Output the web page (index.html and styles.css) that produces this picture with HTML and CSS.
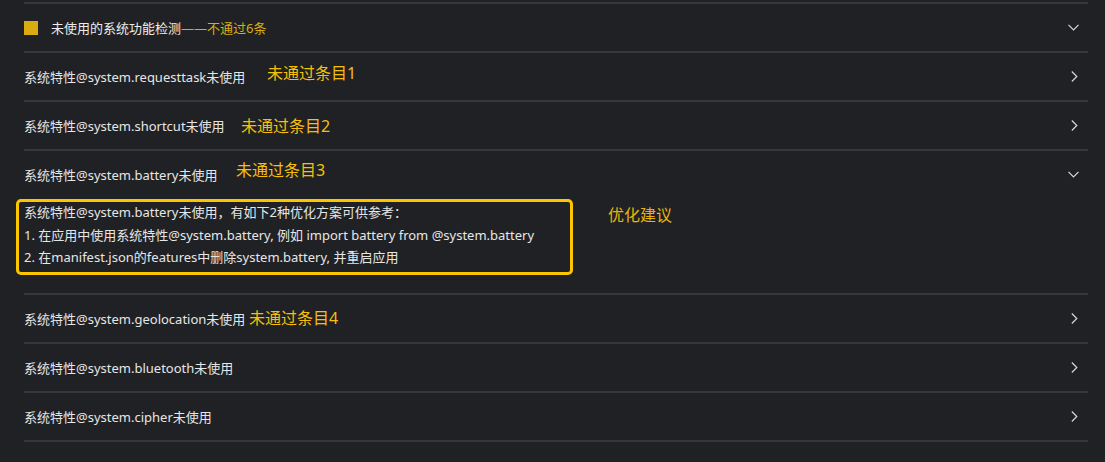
FILE: index.html
```html
<!DOCTYPE html>
<html lang="zh-CN">
<head>
<meta charset="utf-8">
<title>未使用的系统功能检测</title>
<link rel="stylesheet" href="styles.css">
</head>
<body>
<div class="page">
  <div class="list">
    <div class="row head">
      <div class="label"><span class="square"></span><span class="title">未使用的系统功能检测</span><span class="fail">——不通过6条</span></div>
      <svg class="chev" width="11" height="7" viewBox="0 0 11 7"><path d="M0.5 0.8 L5.5 5.8 L10.5 0.8" fill="none" stroke="#d8d8d8" stroke-width="1.2"/></svg>
    </div>
    <div class="row">
      <div class="label">系统特性@system.requesttask未使用</div>
      <svg class="chev" width="7" height="11" viewBox="0 0 7 11"><path d="M0.8 0.5 L5.8 5.5 L0.8 10.5" fill="none" stroke="#d8d8d8" stroke-width="1.2"/></svg>
    </div>
    <div class="row">
      <div class="label">系统特性@system.shortcut未使用</div>
      <svg class="chev" width="7" height="11" viewBox="0 0 7 11"><path d="M0.8 0.5 L5.8 5.5 L0.8 10.5" fill="none" stroke="#d8d8d8" stroke-width="1.2"/></svg>
    </div>
    <div class="section">
      <div class="row open">
        <div class="label">系统特性@system.battery未使用</div>
        <svg class="chev" width="11" height="7" viewBox="0 0 11 7"><path d="M0.5 0.8 L5.5 5.8 L10.5 0.8" fill="none" stroke="#d8d8d8" stroke-width="1.2"/></svg>
      </div>
      <div class="detail">
        <p>系统特性@system.battery未使用，有如下2种优化方案可供参考：</p>
        <p>1. 在应用中使用系统特性@system.battery, 例如 import battery from @system.battery</p>
        <p>2. 在manifest.json的features中删除system.battery, 并重启应用</p>
      </div>
    </div>
    <div class="row">
      <div class="label">系统特性@system.geolocation未使用</div>
      <svg class="chev" width="7" height="11" viewBox="0 0 7 11"><path d="M0.8 0.5 L5.8 5.5 L0.8 10.5" fill="none" stroke="#d8d8d8" stroke-width="1.2"/></svg>
    </div>
    <div class="row">
      <div class="label">系统特性@system.bluetooth未使用</div>
      <svg class="chev" width="7" height="11" viewBox="0 0 7 11"><path d="M0.8 0.5 L5.8 5.5 L0.8 10.5" fill="none" stroke="#d8d8d8" stroke-width="1.2"/></svg>
    </div>
    <div class="row last">
      <div class="label">系统特性@system.cipher未使用</div>
      <svg class="chev" width="7" height="11" viewBox="0 0 7 11"><path d="M0.8 0.5 L5.8 5.5 L0.8 10.5" fill="none" stroke="#d8d8d8" stroke-width="1.2"/></svg>
    </div>
  </div>

  <span class="note n1">未通过条目1</span>
  <span class="note n2">未通过条目2</span>
  <span class="note n3">未通过条目3</span>
  <span class="note n4">未通过条目4</span>
  <span class="note n5">优化建议</span>
  <div class="box"></div>
</div>
</body>
</html>
```
FILE: styles.css
```css
html, body {
  margin: 0;
  padding: 0;
  background: #202125;
}
.page {
  position: relative;
  width: 1105px;
  height: 462px;
  overflow: hidden;
  font-family: "Segoe UI", "Noto Sans", "Noto Sans CJK SC", sans-serif;
  color: #e6e6e6;
  font-size: 13px;
}
.list {
  margin: 2px 17px 0 24px;
  display: flex;
  flex-direction: column;
}
.row {
  height: 47px;
  border-top: 2px solid #36373a;
  display: flex;
  align-items: center;
  justify-content: space-between;
}
.row.last {
  border-bottom: 2px solid #36373a;
}
.label {
  display: flex;
  align-items: center;
  white-space: nowrap;
}
.square {
  width: 14px;
  height: 14px;
  background: #d9ad12;
  margin-right: 13px;
}
.title {
  color: #ececec;
}
.fail {
  color: #d9ad12;
}
.chev {
  margin-right: 10px;
  display: block;
}
.row.head .chev,
.row.open .chev {
  margin-right: 9px;
}
.detail {
  padding: 3px 0 24px 0;
}
.detail p {
  margin: 0;
  line-height: 22.5px;
  white-space: nowrap;
}
.note {
  position: absolute;
  color: #f5bf0a;
  font-size: 16px;
  line-height: 20px;
  white-space: nowrap;
}
.n1 { left: 267px; top: 63px; }
.n2 { left: 241px; top: 116px; }
.n3 { left: 236px; top: 160px; }
.n4 { left: 249px; top: 308px; }
.n5 { left: 608px; top: 205px; color: #e8b50c; }
.box {
  position: absolute;
  left: 16px;
  top: 199px;
  width: 551px;
  height: 70px;
  border: 3px solid #fcc500;
  border-radius: 5px;
}
```
